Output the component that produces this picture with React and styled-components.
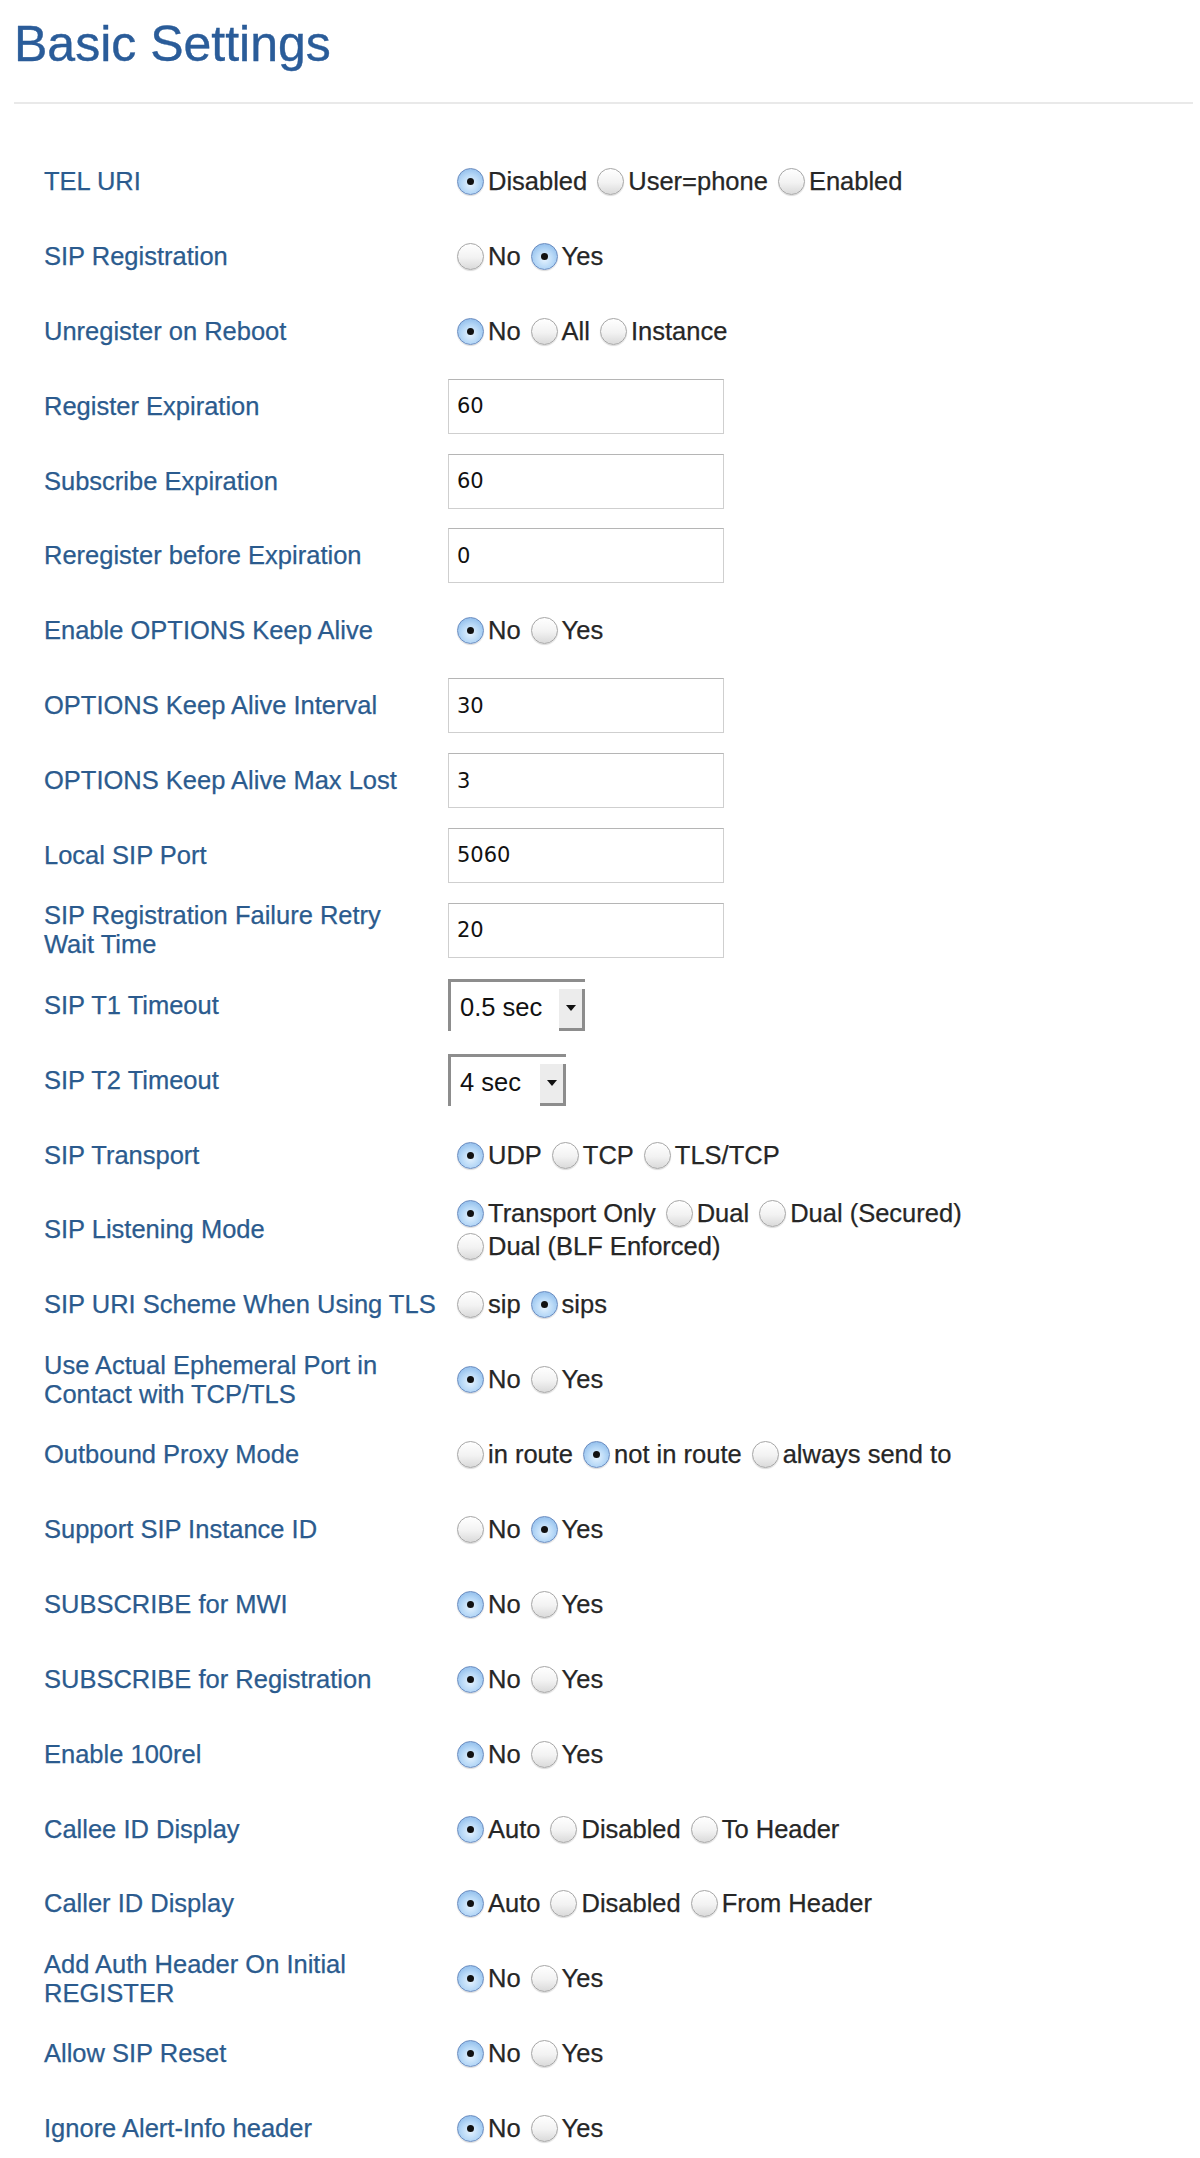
import React from "react";
import styled, { createGlobalStyle } from "styled-components";

const GlobalStyle = createGlobalStyle`
  html, body {
    margin: 0;
    padding: 0;
    background: #fff;
  }
  body {
    font-family: "Liberation Sans", Arial, Helvetica, sans-serif;
  }
`;

const rows = [
  { label: "TEL URI", options: ["Disabled", "User=phone", "Enabled"], value: 0 },
  { label: "SIP Registration", options: ["No", "Yes"], value: 1 },
  { label: "Unregister on Reboot", options: ["No", "All", "Instance"], value: 0 },
  { label: "Register Expiration", text: "60" },
  { label: "Subscribe Expiration", text: "60" },
  { label: "Reregister before Expiration", text: "0" },
  { label: "Enable OPTIONS Keep Alive", options: ["No", "Yes"], value: 0 },
  { label: "OPTIONS Keep Alive Interval", text: "30" },
  { label: "OPTIONS Keep Alive Max Lost", text: "3" },
  { label: "Local SIP Port", text: "5060" },
  { label: ["SIP Registration Failure Retry", "Wait Time"], text: "20" },
  { label: "SIP T1 Timeout", select: "0.5 sec", width: 137 },
  { label: "SIP T2 Timeout", select: "4 sec", width: 118 },
  { label: "SIP Transport", options: ["UDP", "TCP", "TLS/TCP"], value: 0 },
  {
    label: "SIP Listening Mode",
    options: ["Transport Only", "Dual", "Dual (Secured)", "Dual (BLF Enforced)"],
    value: 0,
  },
  { label: "SIP URI Scheme When Using TLS", options: ["sip", "sips"], value: 1 },
  { label: ["Use Actual Ephemeral Port in", "Contact with TCP/TLS"], options: ["No", "Yes"], value: 0 },
  { label: "Outbound Proxy Mode", options: ["in route", "not in route", "always send to"], value: 1 },
  { label: "Support SIP Instance ID", options: ["No", "Yes"], value: 1 },
  { label: "SUBSCRIBE for MWI", options: ["No", "Yes"], value: 0 },
  { label: "SUBSCRIBE for Registration", options: ["No", "Yes"], value: 0 },
  { label: "Enable 100rel", options: ["No", "Yes"], value: 0 },
  { label: "Callee ID Display", options: ["Auto", "Disabled", "To Header"], value: 0 },
  { label: "Caller ID Display", options: ["Auto", "Disabled", "From Header"], value: 0 },
  { label: ["Add Auth Header On Initial", "REGISTER"], options: ["No", "Yes"], value: 0 },
  { label: "Allow SIP Reset", options: ["No", "Yes"], value: 0 },
  { label: "Ignore Alert-Info header", options: ["No", "Yes"], value: 0 },
];

const Page = styled.div`
  padding: 16px 7px 20px 14px;
`;

const Title = styled.h1`
  margin: 0;
  font-size: 50px;
  line-height: 56px;
  font-weight: normal;
  color: #2a5c99;
  -webkit-text-stroke: 0.4px #2a5c99;
`;

const Divider = styled.div`
  height: 2px;
  background: #e9e9e9;
  margin-top: 30px;
`;

const Form = styled.div`
  margin-top: 40px;
  display: flex;
  flex-direction: column;
`;

const Row = styled.div`
  height: 74.9px;
  display: grid;
  grid-template-columns: 404px 1fr;
  align-items: center;
  padding-left: 30px;
`;

const Label = styled.div`
  font-size: 25.5px;
  line-height: 29px;
  color: #2b5b8e;
  -webkit-text-stroke: 0.25px #2b5b8e;
`;

const Group = styled.div`
  display: flex;
  flex-wrap: wrap;
  align-items: center;
  column-gap: 10px;
  row-gap: 4px;
  max-width: 600px;
  padding-left: 9px;
`;

const Option = styled.label`
  display: inline-flex;
  align-items: center;
  gap: 4px;
  font-size: 25.5px;
  line-height: 29px;
  color: #262626;
  -webkit-text-stroke: 0.25px #262626;
`;

const Dot = styled.span`
  width: 27px;
  height: 27px;
  border-radius: 50%;
  box-sizing: border-box;
  display: inline-flex;
  align-items: center;
  justify-content: center;
  border: 1px solid ${(p) => (p.checked ? "#6a8cc0" : "#a6a6a6")};
  background: ${(p) =>
    p.checked
      ? "radial-gradient(circle at 50% 60%, #e6f3fe 0%, #b8d9f7 45%, #7cafe5 100%)"
      : "linear-gradient(#ffffff 0%, #f2f2f2 55%, #dadada 100%)"};
  box-shadow: 0 1px 1px rgba(0, 0, 0, 0.15);

  &::after {
    content: "";
    width: 7px;
    height: 7px;
    border-radius: 50%;
    background: #111;
    display: ${(p) => (p.checked ? "block" : "none")};
  }
`;

const TextBox = styled.div`
  width: 276px;
  height: 55px;
  box-sizing: border-box;
  border: 1px solid #cfcfcf;
  border-top-color: #b5b5b5;
  display: flex;
  align-items: center;
  padding-left: 8px;
  font-family: "DejaVu Sans", "Open Sans", sans-serif;
  font-size: 21px;
  color: #111;
`;

const Select = styled.div`
  height: 52px;
  box-sizing: border-box;
  border-top: 3px solid #8d8d8d;
  border-left: 3px solid #8d8d8d;
  display: flex;
  justify-content: space-between;
  font-size: 25.5px;
  color: #111;
`;

const SelectValue = styled.span`
  align-self: center;
  padding: 2px 0 0 9px;
`;

const Arrow = styled.span`
  align-self: flex-end;
  width: 26px;
  height: 42px;
  box-sizing: border-box;
  background: #ececec;
  border-right: 3px solid #8d8d8d;
  border-bottom: 3px solid #8d8d8d;
  display: flex;
  align-items: center;
  justify-content: center;

  &::after {
    content: "";
    border-left: 5px solid transparent;
    border-right: 5px solid transparent;
    border-top: 6px solid #111;
    margin-top: -2px;
  }
`;

const Control = ({ row }) => {
  if (row.text !== undefined) return <TextBox>{row.text}</TextBox>;
  if (row.select)
    return (
      <Select style={{ width: row.width }}>
        <SelectValue>{row.select}</SelectValue>
        <Arrow />
      </Select>
    );
  return (
    <Group>
      {row.options.map((o, i) => (
        <Option key={o}>
          <Dot checked={i === row.value} />
          {o}
        </Option>
      ))}
    </Group>
  );
};

const App = () => {
  return (
    <Page>
      <GlobalStyle />
      <Title>Basic Settings</Title>
      <Divider />
      <Form>
        {rows.map((r, i) => (
          <Row key={i}>
            <Label>
              {Array.isArray(r.label)
                ? r.label.map((l, j) => (
                    <React.Fragment key={j}>
                      {j > 0 && <br />}
                      {l}
                    </React.Fragment>
                  ))
                : r.label}
            </Label>
            <div>
              <Control row={r} />
            </div>
          </Row>
        ))}
      </Form>
    </Page>
  );
};

export default App;
